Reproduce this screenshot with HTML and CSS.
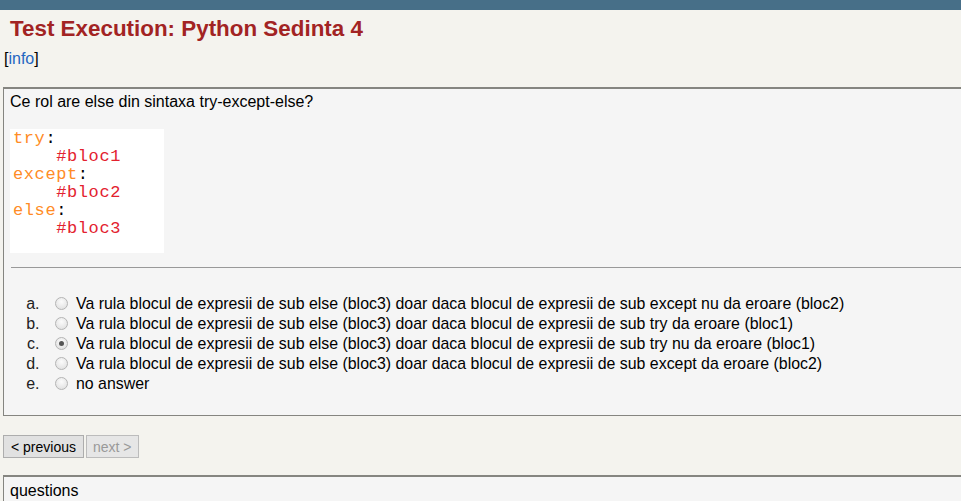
FILE: index.html
```html
<!DOCTYPE html>
<html>
<head>
<meta charset="utf-8">
<link rel="stylesheet" href="styles.css">
</head>
<body>
<div class="topbar"></div>
<h1 class="title">Test Execution: Python Sedinta 4</h1>
<div class="info">[<a href="#">info</a>]</div>
<div class="qbox">
  <div class="qtext">Ce rol are else din sintaxa try-except-else?</div>
  <pre class="code"><span class="kw">try</span>:
    <span class="cm">#bloc1</span>
<span class="kw">except</span>:
    <span class="cm">#bloc2</span>
<span class="kw">else</span>:
    <span class="cm">#bloc3</span>
</pre>
  <hr class="sep">
  <ol class="answers">
    <li><input type="radio" name="a"><span>Va rula blocul de expresii de sub else (bloc3) doar daca blocul de expresii de sub except nu da eroare (bloc2)</span></li>
    <li><input type="radio" name="a"><span>Va rula blocul de expresii de sub else (bloc3) doar daca blocul de expresii de sub try da eroare (bloc1)</span></li>
    <li><input type="radio" name="a" checked><span>Va rula blocul de expresii de sub else (bloc3) doar daca blocul de expresii de sub try nu da eroare (bloc1)</span></li>
    <li><input type="radio" name="a"><span>Va rula blocul de expresii de sub else (bloc3) doar daca blocul de expresii de sub except da eroare (bloc2)</span></li>
    <li><input type="radio" name="a"><span>no answer</span></li>
  </ol>
</div>
<div class="nav">
  <button class="btn">&lt; previous</button><button class="btn btn-next" disabled>next &gt;</button>
</div>
<div class="qlist">questions</div>
</body>
</html>
```
FILE: styles.css
```css
html, body {
  margin: 0;
  padding: 0;
  background: #f4f3ee;
  font-family: "Liberation Sans", Arial, sans-serif;
  font-size: 16px;
  color: #000;
  overflow: hidden;
}
.topbar {
  height: 10px;
  background: #476f88;
}
.title {
  margin: 5px 0 0 10px;
  font-size: 22.4px;
  line-height: 27px;
  font-weight: bold;
  color: #a22323;
}
.info {
  margin: 8px 0 0 4px;
  font-size: 16px;
  line-height: 18px;
}
.info a {
  color: #1f66c1;
  text-decoration: none;
}
.qbox {
  margin: 19px 0 0 3px;
  width: 980px;
  border: 1px solid #858580;
  border-top-width: 2px;
  background: #f5f5f5;
  padding: 4px 0 0 6px;
  height: 329px;
  box-sizing: border-box;
}
.qtext {
  font-size: 16px;
  line-height: 18px;
}
.code {
  margin: 18px 0 0 0;
  width: 154px;
  height: 124px;
  box-sizing: border-box;
  padding: 1px 0 0 3px;
  background: #fff;
  font-family: "Liberation Mono", "Courier New", monospace;
  font-size: 17px;
  letter-spacing: 0.6px;
  line-height: 18px;
}
.kw { color: #ff8c26; }
.cm { color: #e3212e; }
.sep {
  margin: 14px 0 0 1px;
  border: 0;
  border-top: 1px solid #999;
  height: 0;
}
.answers {
  margin: 26px 0 0 0;
  padding-left: 34px;
  list-style: lower-alpha;
  font-size: 16px;
}
.answers li {
  line-height: 20px;
  height: 20px;
  color: #222;
  padding-left: 10px;
}
.answers span {
  color: #000;
  font-size: 15.9px;
}
.answers input {
  appearance: none;
  -webkit-appearance: none;
  margin: 0 8px 0 1px;
  width: 13px;
  height: 13px;
  border-radius: 50%;
  border: 1px solid #b4b4b4;
  background: radial-gradient(circle at 50% 35%, #fbfbfb, #dcdcdc);
  vertical-align: -1px;
  box-sizing: border-box;
  position: relative;
}
.answers input:checked::after {
  content: "";
  position: absolute;
  left: 3px;
  top: 3px;
  width: 5px;
  height: 5px;
  border-radius: 50%;
  background: #555;
}
.nav {
  margin: 19px 0 0 3px;
  display: flex;
  gap: 2px;
}
.btn {
  font-family: "Liberation Sans", Arial, sans-serif;
  font-size: 14px;
  height: 23px;
  padding: 0 7px;
  border: 1px solid #adadad;
  background: #e1e1e1;
  color: #000;
  border-radius: 0;
}
.btn-next {
  padding: 0 6px;
}
.btn:disabled {
  color: #999;
  background: #e6e6e6;
  border-color: #bcbcbc;
}
.qlist {
  margin: 17px 0 0 3px;
  width: 980px;
  border: 1px solid #858580;
  border-top-width: 2px;
  background: #f5f5f5;
  padding: 5px 0 0 6px;
  height: 40px;
  box-sizing: border-box;
  font-size: 16px;
  line-height: 18px;
}
```
